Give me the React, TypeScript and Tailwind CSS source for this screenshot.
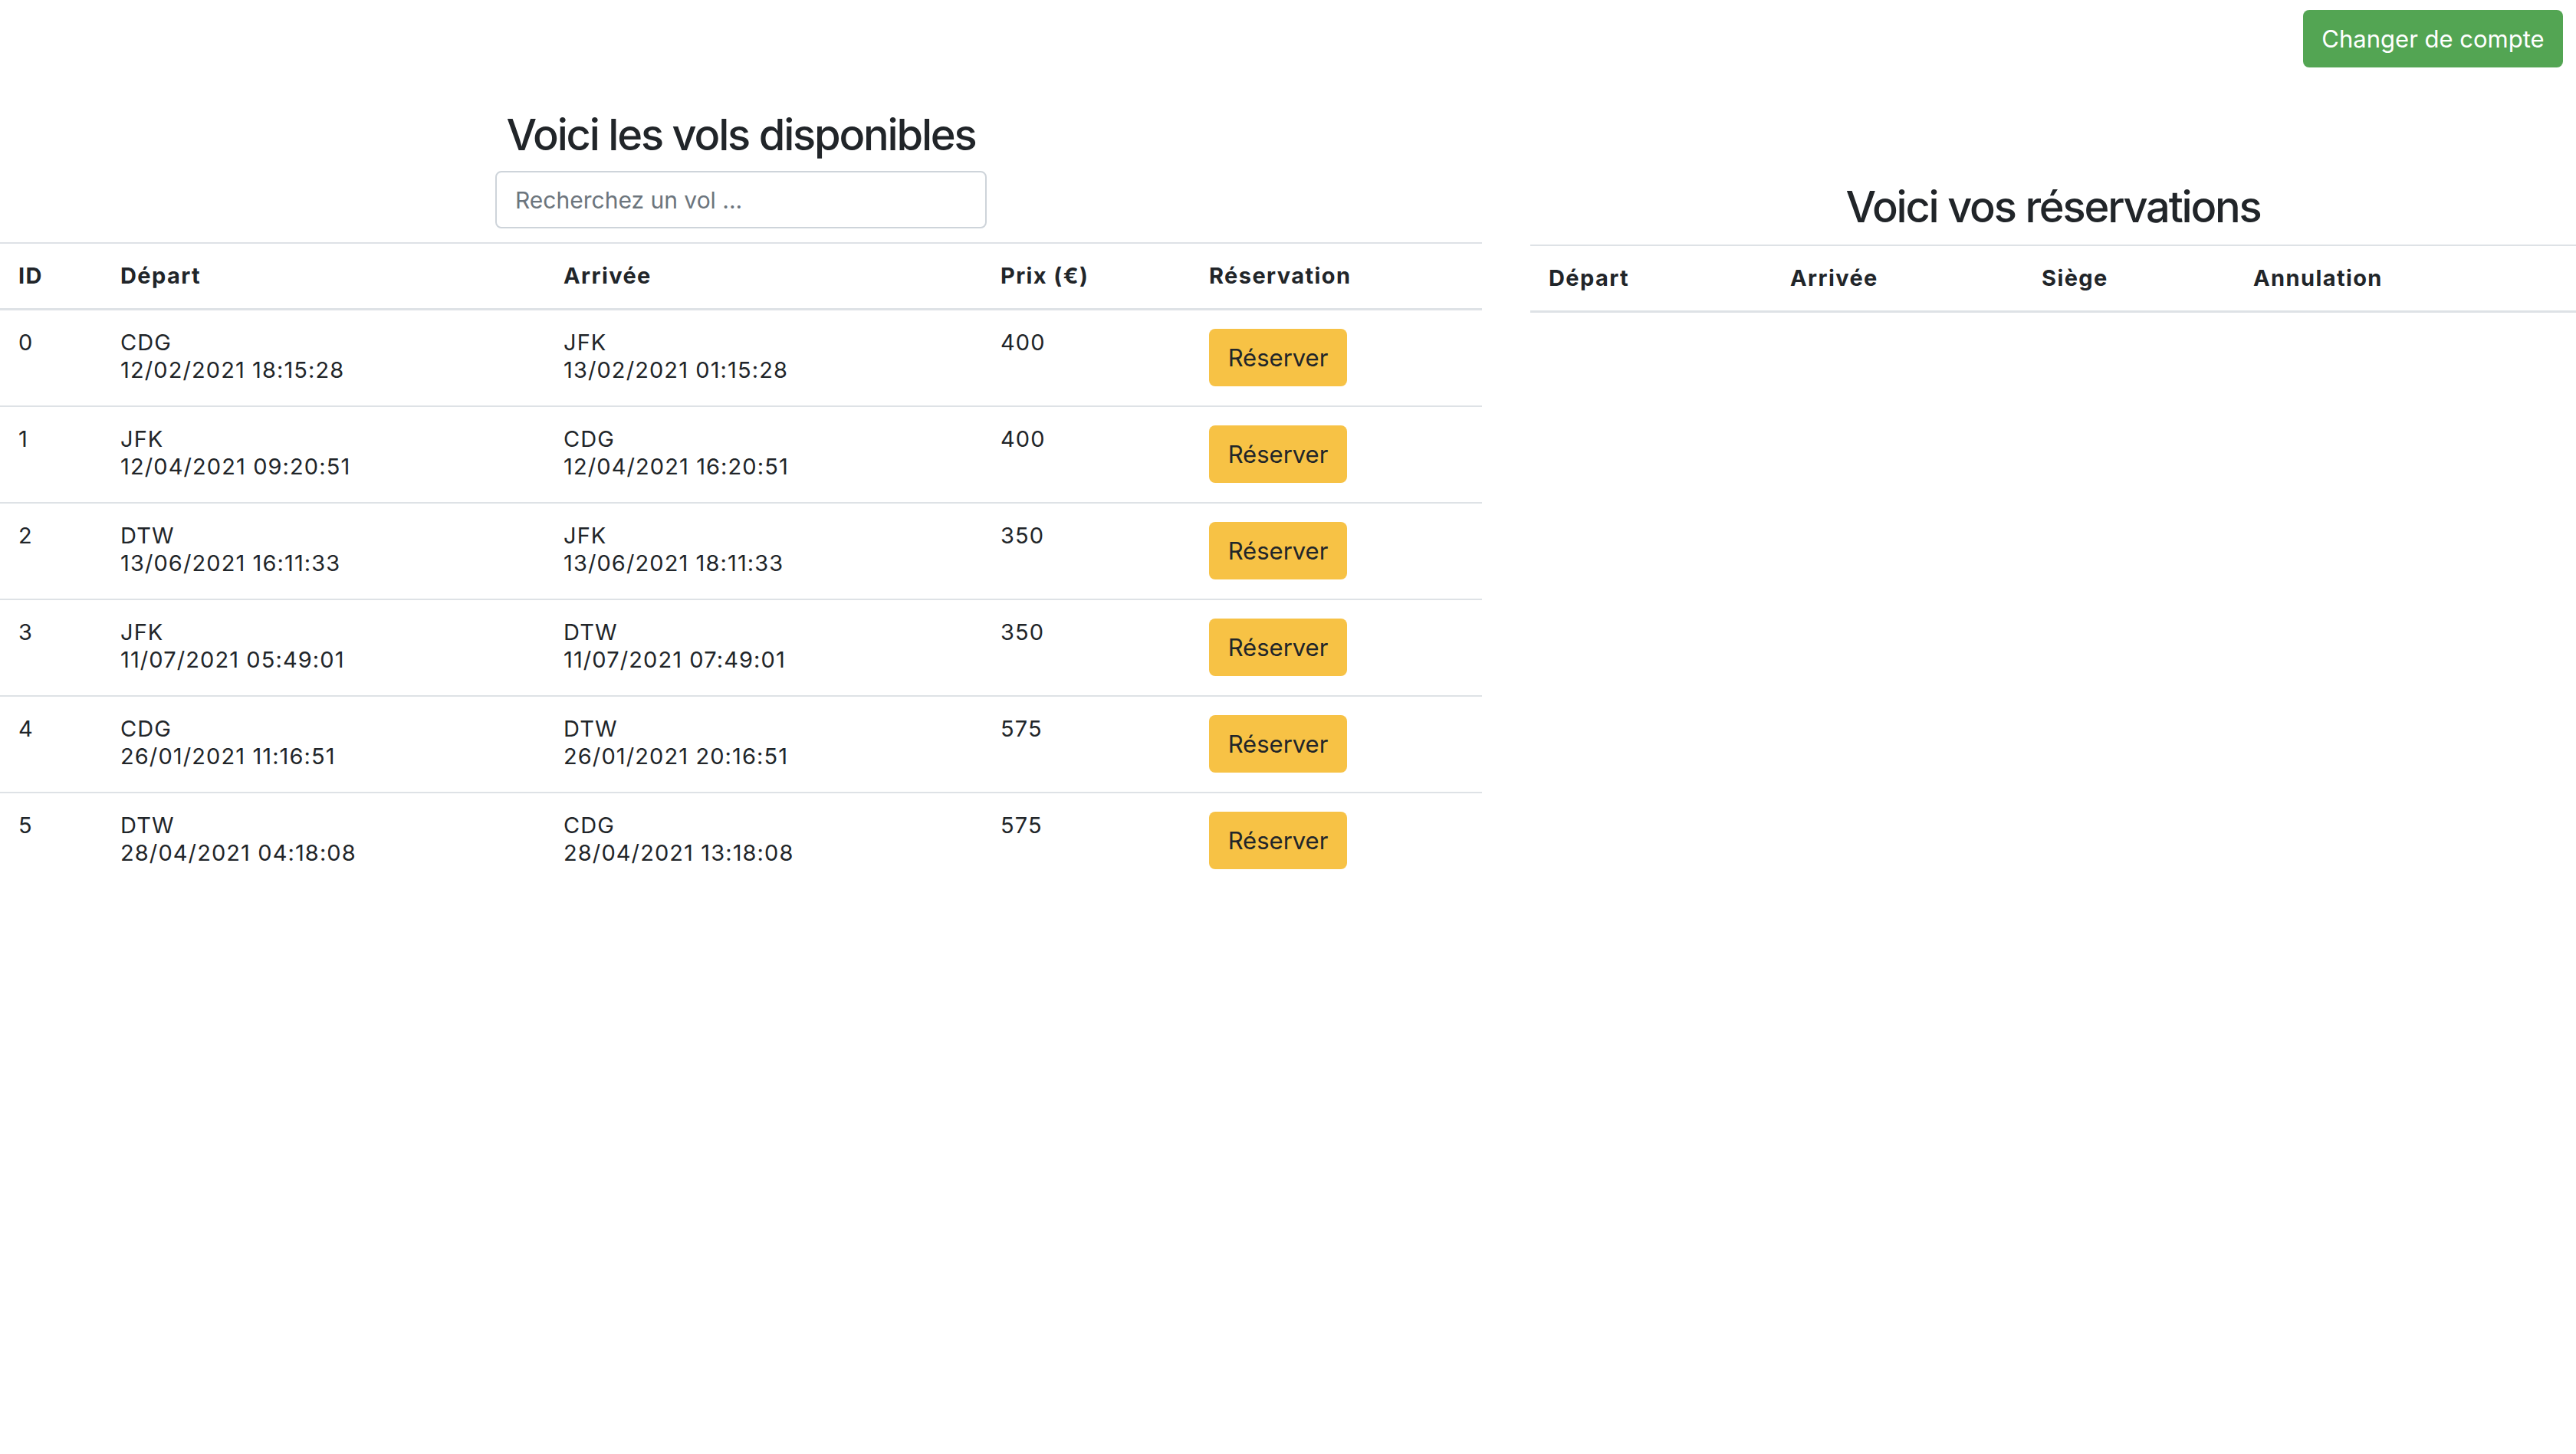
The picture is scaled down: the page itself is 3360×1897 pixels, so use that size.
const flights = [
  { id: 0, from: 'CDG', fromDate: '12/02/2021 18:15:28', to: 'JFK', toDate: '13/02/2021 01:15:28', price: 400 },
  { id: 1, from: 'JFK', fromDate: '12/04/2021 09:20:51', to: 'CDG', toDate: '12/04/2021 16:20:51', price: 400 },
  { id: 2, from: 'DTW', fromDate: '13/06/2021 16:11:33', to: 'JFK', toDate: '13/06/2021 18:11:33', price: 350 },
  { id: 3, from: 'JFK', fromDate: '11/07/2021 05:49:01', to: 'DTW', toDate: '11/07/2021 07:49:01', price: 350 },
  { id: 4, from: 'CDG', fromDate: '26/01/2021 11:16:51', to: 'DTW', toDate: '26/01/2021 20:16:51', price: 575 },
  { id: 5, from: 'DTW', fromDate: '28/04/2021 04:18:08', to: 'CDG', toDate: '28/04/2021 13:18:08', price: 575 },
];

const th = 'border-t-2 border-b-[3px] border-[#dee2e6] px-[24px] py-[24px] text-left align-top font-bold leading-[36px] tracking-[1.4px]';

function FlightsTable() {
  return (
    <table className="mt-[18px] w-full table-fixed border-collapse text-[29px]">
      <colgroup>
        <col className="w-[133px]" />
        <col className="w-[578px]" />
        <col className="w-[570px]" />
        <col className="w-[272px]" />
        <col className="w-[380px]" />
      </colgroup>
      <thead>
        <tr>
          <th className={th}>ID</th>
          <th className={th}>Départ</th>
          <th className={th}>Arrivée</th>
          <th className={th}>Prix (€)</th>
          <th className={th}>Réservation</th>
        </tr>
      </thead>
      <tbody>
        {flights.map((f, i) => {
          const td = `px-[24px] pt-[24px] pb-[25px] align-top leading-[36px] tracking-[1.1px] ${i > 0 ? 'border-t-2 border-[#dee2e6]' : ''}`;
          return (
            <tr key={f.id}>
              <td className={td}>{f.id}</td>
              <td className={td}>
                {f.from}
                <br />
                {f.fromDate}
              </td>
              <td className={td}>
                {f.to}
                <br />
                {f.toDate}
              </td>
              <td className={td}>{f.price}</td>
              <td className={td}>
                <button className="flex h-[75px] w-[180px] items-center justify-center rounded-[8px] bg-[#f7c245] text-[31px] leading-none tracking-normal text-[#212529]">
                  Réserver
                </button>
              </td>
            </tr>
          );
        })}
      </tbody>
    </table>
  );
}

function BookingsTable() {
  return (
    <table className="mt-[18px] w-full table-fixed border-collapse text-[29px]">
      <colgroup>
        <col className="w-[315px]" />
        <col className="w-[328px]" />
        <col className="w-[276px]" />
        <col className="w-[445px]" />
      </colgroup>
      <thead>
        <tr>
          <th className={th}>Départ</th>
          <th className={th}>Arrivée</th>
          <th className={th}>Siège</th>
          <th className={th}>Annulation</th>
        </tr>
      </thead>
      <tbody />
    </table>
  );
}

export default function App() {
  return (
    <div className="min-h-screen bg-white font-['Inter','Liberation_Sans',sans-serif] text-[#212529]">
      <div className="flex justify-end pt-[13px] pr-[17px]">
        <button className="h-[75px] w-[339px] rounded-[8px] bg-[#53a553] pt-[2px] text-[31px] text-white">
          Changer de compte
        </button>
      </div>
      <div className="mt-[47px] flex gap-[63px]">
        <div className="w-[1933px] shrink-0">
          <h2 className="pt-[12px] text-center text-[56px] font-medium leading-[58px] tracking-[-2.2px]">
            Voici les vols disponibles
          </h2>
          <input
            type="text"
            placeholder="Recherchez un vol ..."
            className="mx-auto mt-[18px] block h-[75px] w-[641px] rounded-[8px] border-2 border-[#ced4da] px-[24px] text-[30px] outline-none placeholder:text-[#6c757d]"
          />
          <FlightsTable />
        </div>
        <div className="mt-[96px] flex-1">
          <h2 className="pt-[10px] pb-[2px] text-center text-[56px] font-medium leading-[58px] tracking-[-2.2px]">
            Voici vos réservations
          </h2>
          <BookingsTable />
        </div>
      </div>
    </div>
  );
}
